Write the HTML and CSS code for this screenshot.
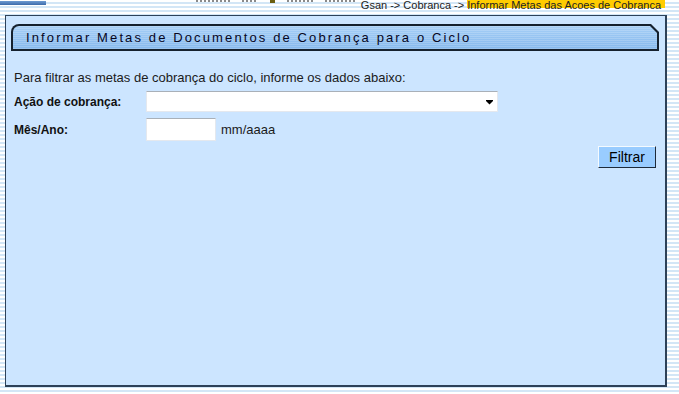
FILE: index.html
```html
<!DOCTYPE html>
<html lang="pt-BR">
<head>
<meta charset="utf-8">
<title>Informar Metas</title>
<link rel="stylesheet" href="styles.css">
</head>
<body>
<div class="top">
  <div class="top-left"><div class="blue-bar"></div></div>
  <div class="menu-frag">
    <i class="frag frag-a"></i><i class="frag frag-b"></i><i class="menu-icon"></i><i class="frag frag-c"></i><i class="frag frag-d"></i>
  </div>
  <div class="crumbs"><span class="crumb-text">Gsan -&gt; Cobranca -&gt; </span><span class="crumb-hl">Informar Metas das Acoes de Cobranca</span></div>
</div>
<div class="panel">
  <div class="tab"><div class="tab-inner">Informar Metas de Documentos de Cobrança para o Ciclo</div></div>
  <p class="intro">Para filtrar as metas de cobrança do ciclo, informe os dados abaixo:</p>
  <div class="row row-select">
    <label class="lbl">Ação de cobrança:</label>
    <div class="select"><svg class="arrow" width="8" height="5" viewBox="0 0 8 5"><path d="M0 0H7V1L3.5 4.5L0 1Z" fill="#000"/></svg></div>
  </div>
  <div class="row row-input">
    <label class="lbl">Mês/Ano:</label>
    <div class="input"></div>
    <span class="hint">mm/aaaa</span>
  </div>
  <div class="actions"><button class="btn">Filtrar</button></div>
</div>
</body>
</html>
```
FILE: styles.css
```css
html, body {
  margin: 0;
  padding: 0;
}
body {
  width: 679px;
  height: 394px;
  overflow: hidden;
  font-family: "Liberation Sans", Arial, sans-serif;
  background: repeating-linear-gradient(to bottom, #ffffff 0 2px, #d3e6f6 2px 4px);
}
.top {
  height: 15px;
  display: flex;
  align-items: flex-start;
}
.top-left {
  width: 46px;
  padding-top: 1px;
}
.blue-bar {
  height: 4px;
  background: linear-gradient(to bottom, #6e9bd2, #3c6bab);
}
.menu-frag {
  margin-left: 150px;
  height: 3px;
  display: flex;
  align-items: flex-start;
  gap: 12px;
}
.frag {
  display: block;
  height: 2px;
  background: repeating-linear-gradient(to right, #8a8a8a 0 2px, rgba(0,0,0,0) 2px 4px);
}
.frag-a { width: 34px; }
.frag-b { width: 16px; }
.frag-c { width: 26px; }
.frag-d { width: 30px; }
.menu-icon {
  width: 5px;
  height: 3px;
  background: #6b5e10;
  display: block;
}
.crumbs {
  margin-left: auto;
  margin-right: 14px;
  font-size: 11px;
  color: #222;
  white-space: nowrap;
  display: flex;
}
.crumb-text {
  display: inline-block;
  height: 11px;
  line-height: 11px;
  padding-right: 3px;
}
.crumb-hl {
  display: inline-block;
  height: 11px;
  line-height: 11px;
  background: linear-gradient(to bottom, #ffcc00 0 8px, rgba(255,204,0,0) 8px);
  padding-right: 4px;
}
.panel {
  margin-left: 5px;
  width: 659px;
  height: 369px;
  background: #cce5ff;
  border: 1px solid #2d4158;
  border-right-width: 2px;
  border-bottom-width: 2px;
}
.tab {
  margin: 8px 0 0 5px;
  width: 648px;
  height: 27px;
  box-sizing: border-box;
  padding: 2px;
  background: #15212e;
  border-top-left-radius: 8px;
  clip-path: polygon(0 0, calc(100% - 8px) 0, 100% 8px, 100% 100%, 0 100%);
}
.tab-inner {
  height: 23px;
  line-height: 23px;
  border-top-left-radius: 6px;
  clip-path: polygon(0 0, calc(100% - 7px) 0, 100% 7px, 100% 100%, 0 100%);
  background:
    repeating-linear-gradient(to bottom, rgba(255,255,255,0.18) 0 1px, rgba(0,0,0,0) 1px 2px),
    linear-gradient(to bottom, #a6cff7, #85b8ec);
  padding-left: 13px;
  font-size: 13px;
  letter-spacing: 2.12px;
  color: #06061e;
  white-space: nowrap;
}
.intro {
  margin: 19px 0 0 8px;
  font-size: 13px;
  line-height: 15px;
  color: #1b1b1b;
}
.row {
  display: flex;
  align-items: center;
  margin-left: 8px;
}
.row-select {
  margin-top: 6px;
  height: 21px;
}
.row-input {
  margin-top: 6px;
  height: 23px;
}
.lbl {
  width: 132px;
  font-size: 12px;
  font-weight: bold;
  color: #111;
}
.select {
  width: 350px;
  height: 19px;
  background: #fff;
  border: 1px solid #e4e8ee;
  border-top-color: #a9b0b8;
  display: flex;
  align-items: center;
  justify-content: flex-end;
}
.arrow {
  margin-right: 3px;
  margin-top: 1px;
}
.input {
  width: 68px;
  height: 21px;
  background: #fff;
  border: 1px solid #e4e8ee;
  border-top-color: #a9b0b8;
}
.hint {
  margin-left: 5px;
  font-size: 13px;
  color: #1b1b1b;
}
.actions {
  display: flex;
  justify-content: flex-end;
  margin: 5px 9px 0 0;
}
.btn {
  width: 58px;
  height: 22px;
  padding: 0;
  font-family: "Liberation Sans", Arial, sans-serif;
  font-size: 14px;
  color: #000;
  background: #99ccff;
  border: 1px solid;
  border-color: #f4faff #1d2a3a #1d2a3a #f4faff;
}
```
